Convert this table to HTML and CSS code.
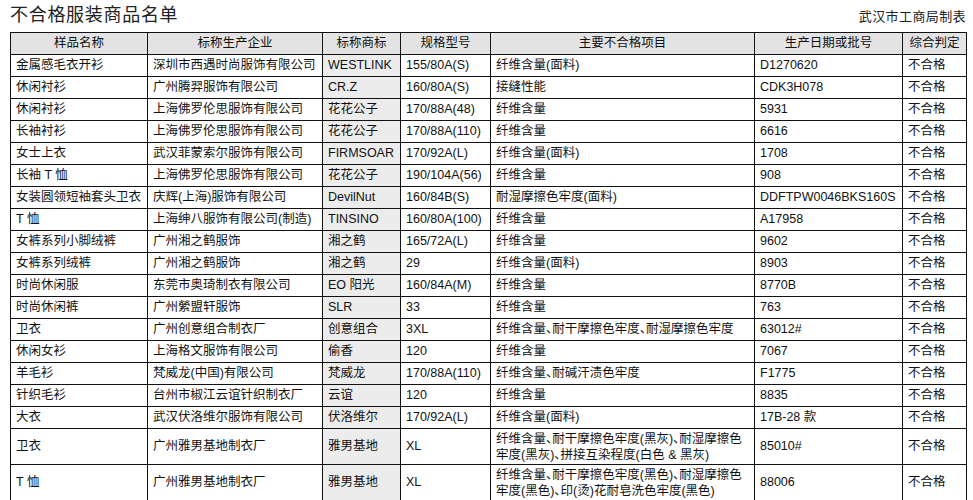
FILE: index.html
```html
<!DOCTYPE html>
<html lang="zh-CN">
<head>
<meta charset="utf-8">
<title>不合格服装商品名单</title>
<link rel="stylesheet" href="styles.css">
</head>
<body>
<div class="page">
  <div class="top">
    <h1 class="title">不合格服装商品名单</h1>
    <div class="maker">武汉市工商局制表</div>
  </div>
  <table class="list">
    <colgroup>
      <col class="c1"><col class="c2"><col class="c3"><col class="c4"><col class="c5"><col class="c6"><col class="c7">
    </colgroup>
    <thead>
      <tr><th>样品名称</th><th>标称生产企业</th><th>标称商标</th><th>规格型号</th><th>主要不合格项目</th><th>生产日期或批号</th><th>综合判定</th></tr>
    </thead>
    <tbody>
      <tr><td>金属感毛衣开衫</td><td>深圳市西遇时尚服饰有限公司</td><td class="brand">WESTLINK</td><td>155/80A(S)</td><td>纤维含量(面料)</td><td>D1270620</td><td>不合格</td></tr>
      <tr><td>休闲衬衫</td><td>广州腾羿服饰有限公司</td><td class="brand">CR.Z</td><td>160/80A(S)</td><td>接缝性能</td><td>CDK3H078</td><td>不合格</td></tr>
      <tr><td>休闲衬衫</td><td>上海佛罗伦思服饰有限公司</td><td class="brand">花花公子</td><td>170/88A(48)</td><td>纤维含量</td><td>5931</td><td>不合格</td></tr>
      <tr><td>长袖衬衫</td><td>上海佛罗伦思服饰有限公司</td><td class="brand">花花公子</td><td>170/88A(110)</td><td>纤维含量</td><td>6616</td><td>不合格</td></tr>
      <tr><td>女士上衣</td><td>武汉菲蒙索尔服饰有限公司</td><td class="brand">FIRMSOAR</td><td>170/92A(L)</td><td>纤维含量(面料)</td><td>1708</td><td>不合格</td></tr>
      <tr><td>长袖 T 恤</td><td>上海佛罗伦思服饰有限公司</td><td class="brand">花花公子</td><td>190/104A(56)</td><td>纤维含量</td><td>908</td><td>不合格</td></tr>
      <tr><td>女装圆领短袖套头卫衣</td><td>庆辉(上海)服饰有限公司</td><td class="brand">DevilNut</td><td>160/84B(S)</td><td>耐湿摩擦色牢度(面料)</td><td>DDFTPW0046BKS160S</td><td>不合格</td></tr>
      <tr><td>T 恤</td><td>上海绅八服饰有限公司(制造)</td><td class="brand">TINSINO</td><td>160/80A(100)</td><td>纤维含量</td><td>A17958</td><td>不合格</td></tr>
      <tr><td>女裤系列小脚绒裤</td><td>广州湘之鹤服饰</td><td class="brand">湘之鹤</td><td>165/72A(L)</td><td>纤维含量</td><td>9602</td><td>不合格</td></tr>
      <tr><td>女裤系列绒裤</td><td>广州湘之鹤服饰</td><td class="brand">湘之鹤</td><td>29</td><td>纤维含量(面料)</td><td>8903</td><td>不合格</td></tr>
      <tr><td>时尚休闲服</td><td>东莞市奥琦制衣有限公司</td><td class="brand">EO 阳光</td><td>160/84A(M)</td><td>纤维含量</td><td>8770B</td><td>不合格</td></tr>
      <tr><td>时尚休闲裤</td><td>广州縈盟轩服饰</td><td class="brand">SLR</td><td>33</td><td>纤维含量</td><td>763</td><td>不合格</td></tr>
      <tr><td>卫衣</td><td>广州创意组合制衣厂</td><td class="brand">创意组合</td><td>3XL</td><td>纤维含量、耐干摩擦色牢度、耐湿摩擦色牢度</td><td>63012#</td><td>不合格</td></tr>
      <tr><td>休闲女衫</td><td>上海格文服饰有限公司</td><td class="brand">偷香</td><td>120</td><td>纤维含量</td><td>7067</td><td>不合格</td></tr>
      <tr><td>羊毛衫</td><td>梵威龙(中国)有限公司</td><td class="brand">梵威龙</td><td>170/88A(110)</td><td>纤维含量、耐碱汗渍色牢度</td><td>F1775</td><td>不合格</td></tr>
      <tr><td>针织毛衫</td><td>台州市椒江云谊针织制衣厂</td><td class="brand">云谊</td><td>120</td><td>纤维含量</td><td>8835</td><td>不合格</td></tr>
      <tr><td>大衣</td><td>武汉伏洛维尔服饰有限公司</td><td class="brand">伏洛维尔</td><td>170/92A(L)</td><td>纤维含量(面料)</td><td>17B-28 款</td><td>不合格</td></tr>
      <tr class="tall"><td>卫衣</td><td>广州雅男基地制衣厂</td><td class="brand">雅男基地</td><td>XL</td><td class="wrap">纤维含量、耐干摩擦色牢度(黑灰)、耐湿摩擦色<br>牢度(黑灰)、拼接互染程度(白色 &amp; 黑灰)</td><td>85010#</td><td>不合格</td></tr>
      <tr class="tall"><td>T 恤</td><td>广州雅男基地制衣厂</td><td class="brand">雅男基地</td><td>XL</td><td class="wrap">纤维含量、耐干摩擦色牢度(黑色)、耐湿摩擦色<br>牢度(黑色)、印(烫)花耐皂洗色牢度(黑色)</td><td>88006</td><td>不合格</td></tr>
    </tbody>
  </table>
</div>
</body>
</html>
```

FILE: styles.css
```css
html, body {
  margin: 0;
  padding: 0;
  background: #fff;
}

body {
  font-family: "Liberation Sans", "Noto Sans CJK SC", sans-serif;
  color: #111;
  font-feature-settings: "halt";
}

.page {
  width: 973px;
}

.top {
  display: flex;
  justify-content: space-between;
  align-items: flex-start;
  height: 32px;
  padding: 0 7px 0 10px;
  box-sizing: border-box;
}

.title {
  margin: 5px 0 0;
  font-size: 18px;
  line-height: 20px;
  font-weight: normal;
  letter-spacing: 0.7px;
  color: #222;
}

.maker {
  margin-top: 10px;
  font-size: 13px;
  line-height: 14px;
  letter-spacing: 0.4px;
  color: #222;
}

.list {
  margin-left: 10px;
  width: 956px;
  border-collapse: collapse;
  table-layout: fixed;
  font-size: 12.5px;
}

.c1 { width: 137px; }
.c2 { width: 175px; }
.c3 { width: 78px; }
.c4 { width: 90px; }
.c5 { width: 264px; }
.c6 { width: 148px; }
.c7 { width: 64px; }

.list th,
.list td {
  border: 1px solid #111;
  height: 21px;
  padding: 0 0 0 5px;
  line-height: 15px;
  text-align: left;
  vertical-align: middle;
  white-space: nowrap;
  overflow: hidden;
}

.list th {
  background: #e3e3e3;
  font-weight: normal;
  text-align: center;
  padding: 0;
}

.list td.brand {
  background: #ececec;
}

.list tr.tall td {
  height: 35px;
}

.list td.wrap {
  line-height: 16px;
}
```
